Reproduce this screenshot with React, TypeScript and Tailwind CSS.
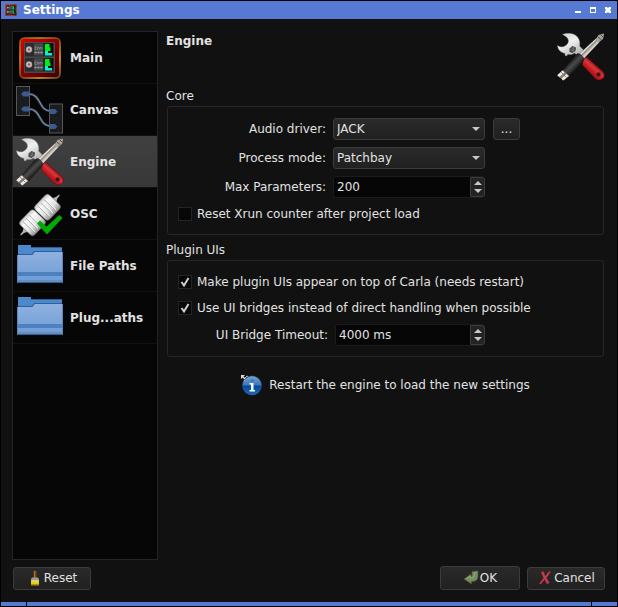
import { useState, type ReactNode } from "react";

function RackIcon({ className }: { className: string }) {
  return (
    <svg viewBox="0 0 42 42" className={className} aria-hidden="true">
      <defs>
        <linearGradient id="rackRed" x1="0" y1="0" x2="1" y2="1">
          <stop offset="0" stopColor="#e00000" />
          <stop offset="0.55" stopColor="#7c0000" />
          <stop offset="1" stopColor="#3c0000" />
        </linearGradient>
        <linearGradient id="rackGold" x1="0" y1="0" x2="1" y2="1">
          <stop offset="0" stopColor="#8a5a08" />
          <stop offset="0.25" stopColor="#c09030" />
          <stop offset="0.5" stopColor="#8a4a10" />
          <stop offset="0.75" stopColor="#d8b040" />
          <stop offset="1" stopColor="#7a4a10" />
        </linearGradient>
      </defs>
      <rect x="1" y="1" width="40" height="40" rx="4.500" fill="url(#rackRed)" stroke="url(#rackGold)" strokeWidth="1.600" />
      <rect x="5" y="5" width="31" height="31" fill="#4a4a4a" />
      {[5, 20].map((y) => (
        <g key={y} transform={`translate(0 ${y})`}>
          <rect x="6" y="1" width="29" height="13.500" fill="#2a2b2d" />
          <circle cx="10" cy="7.500" r="3.200" fill="#a89c9c" />
          <circle cx="10" cy="7.500" r="2.300" fill="#d8d0d0" />
          <circle cx="10" cy="7.500" r="1.300" fill="#a04c4c" />
          <rect x="15" y="1.500" width="9" height="12" fill="#46484a" />
          <path d="M17.500 5h-1.500v2.500h1.500M18.500 7.500V5.500h1.500v2M21 7.500v-2h1M23 5v2.500" fill="none" stroke="#a5a5a5" strokeWidth="0.600" />
          <path d="M15.500 10.500h8" stroke="#a5a5a5" strokeWidth="1.400" strokeDasharray="2 1" />
          <rect x="25.500" y="1.500" width="8.500" height="12" fill="#06120b" />
          <path d="M26 2h4.500v3.500h1V9H26z" fill="#00ee18" />
          <path d="M26 9h3v2h4v2.500h-7z" fill="#00f5d0" />
        </g>
      ))}
    </svg>
  );
}

function CanvasIcon() {
  return (
    <svg viewBox="0 0 48 48" className="size-12" aria-hidden="true">
      <rect x="0.500" y="0.500" width="13" height="29" fill="#1b1c1d" stroke="#56575a" />
      <rect x="33.500" y="18" width="13" height="29" fill="#1b1c1d" stroke="#56575a" />
      <path d="M13 8C25 8 23 25 34 25M13 23C25 23 23 40 34 40" fill="none" stroke="#384252" strokeWidth="2.500" />
      <path d="M13 8C25 8 23 25 34 25M13 23C25 23 23 40 34 40" fill="none" stroke="#7788a2" strokeWidth="1.200" />
      <path d="M5 8l2.500-2.500H13v5H7.500zM5 23l2.500-2.500H13v5H7.500zM41.500 25.500L39 23h-5v5h5zM41.500 40.500L39 38h-5v5h5z" fill="#385c91" />
    </svg>
  );
}

function ToolsIcon() {
  return (
    <svg viewBox="0 0 48 48" className="size-12" aria-hidden="true">
      <defs>
        <linearGradient id="wrench" x1="0" y1="0" x2="0.600" y2="1">
          <stop offset="0" stopColor="#c8c8c8" />
          <stop offset="0.500" stopColor="#f0f0f0" />
          <stop offset="1" stopColor="#b8b8b8" />
        </linearGradient>
        <linearGradient id="redGrip" gradientUnits="userSpaceOnUse" x1="30" y1="40" x2="38" y2="31">
          <stop offset="0" stopColor="#8e0d12" />
          <stop offset="0.450" stopColor="#c81c22" />
          <stop offset="0.700" stopColor="#d8383c" />
          <stop offset="1" stopColor="#8e1015" />
        </linearGradient>
        <linearGradient id="blackGrip" gradientUnits="userSpaceOnUse" x1="13" y1="29" x2="20" y2="36">
          <stop offset="0" stopColor="#222" />
          <stop offset="0.400" stopColor="#4c4c4c" />
          <stop offset="1" stopColor="#161616" />
        </linearGradient>
        <linearGradient id="shaft" gradientUnits="userSpaceOnUse" x1="29" y1="13" x2="33" y2="17">
          <stop offset="0" stopColor="#6a655f" />
          <stop offset="0.350" stopColor="#eeeae4" />
          <stop offset="0.600" stopColor="#8f8981" />
          <stop offset="1" stopColor="#d4cfc8" />
        </linearGradient>
      </defs>
      <path d="M5.500 1.500C10-.500 16-.300 19.500 3c3 3 3.800 6.500 3 10l4 4-5.500 6-3.500-3c-2.500 1.700-4.500 2-6.500 1.200L9.500 23 8 22.500V20.500C4 19.500.800 17 .500 12.500c2 1.500 5 2 7.500.500 2.800-1.500 4-4 3.200-6.500C10.500 4.500 8.500 3 5.500 1.500z" fill="url(#wrench)" stroke="#858585" strokeWidth="0.400" />
      <path d="M12.500 15.500l3-2.500 3.500 1.500-.500 3.500-3 2-3-1z" fill="#484848" />
      <path d="M13.500 16.500l4 2M15 14.500l2.500 3M17 14l-2 4.500" stroke="#8a8a8a" strokeWidth="0.600" />
      <path d="M26 26.500l3.500-2.500L46 38.500c2 2.500 1.500 6-.800 7.500-2.500 1.700-5 1.200-7-.500L25.500 32z" fill="url(#redGrip)" stroke="#5a070b" strokeWidth="0.500" />
      <circle cx="41.500" cy="41.500" r="2.200" fill="#3a1012" stroke="#a83034" strokeWidth="0.500" />
      <path d="M22 21L39 5.500l3.500 3.500L26.500 26z" fill="url(#shaft)" />
      <path d="M38.500 6.500L41.500 2l5-1.500L47 1.500 46 6l-4.500 3.500z" fill="#a8a29a" />
      <path d="M40.500 3.500l4 3.500M43.500 1.500l2.500 2.500" stroke="#4b4640" strokeWidth="0.900" />
      <path d="M6 37L20.500 20.500c3 0 6.500 3.500 6.500 6.500L12.500 43z" fill="url(#blackGrip)" stroke="#111" strokeWidth="0.500" />
      <path d="M6 37l6.500 6-6 4.500L0 42.500z" fill="#857e75" />
      <path d="M.500 42l5-4.500 2 2-5 4.500zM4.500 45.500l5-4.500 2 2L6 47.500z" fill="#eeeae3" />
      <path d="M4 39l5.500 5.500" stroke="#66615b" strokeWidth="0.700" />
    </svg>
  );
}

function OscIcon() {
  return (
    <svg viewBox="0 0 48 48" className="size-12" aria-hidden="true">
      <defs>
        <linearGradient id="plugBody" x1="0" y1="0" x2="0" y2="1">
          <stop offset="0" stopColor="#c4c4c4" />
          <stop offset="0.250" stopColor="#f8f8f8" />
          <stop offset="0.650" stopColor="#e2e2e2" />
          <stop offset="1" stopColor="#8c8c8c" />
        </linearGradient>
      </defs>
      <g transform="translate(24 25) rotate(-46)">
        <path d="M-20-3l-4 2-4 .500v1l4 .500 4 2zM20-3l4 2 4 .500v1L24 1l-4 2z" fill="#b4b4b4" />
        <rect x="-21" y="-10" width="20.500" height="20" rx="3.500" fill="url(#plugBody)" stroke="#6c6c6c" strokeWidth="0.500" />
        <rect x="0.500" y="-10" width="20.500" height="20" rx="3.500" fill="url(#plugBody)" stroke="#6c6c6c" strokeWidth="0.500" />
        <path d="M-16.500-8V9M-12-8V9M-7.500-8V9M5-8V9M9.500-8V9M14-8V9" stroke="#a8a8a8" strokeWidth="0.900" />
        <path d="M-15.500-8V8M-11-8V8M-6.500-8V8M6-8V8M10.500-8V8M15-8V8" stroke="#fff" strokeWidth="0.900" />
      </g>
      <path d="M21 33.500l3-3 6.500 6L43.500 25l3 3L31 44.500z" fill="#00aa06" />
    </svg>
  );
}

function FolderIcon() {
  return (
    <svg viewBox="0 0 48 48" className="size-12" aria-hidden="true">
      <defs>
        <linearGradient id="folderFront" x1="0" y1="0" x2="0" y2="1">
          <stop offset="0" stopColor="#8fb1df" />
          <stop offset="1" stopColor="#6e9cd5" />
        </linearGradient>
      </defs>
      <path d="M2 3h13v2h31v10H2z" fill="#4c88cc" />
      <path d="M15 5.500h31M2 12.500h14l2-3h28" fill="none" stroke="#2d5f9c" />
      <path d="M1 13h16l2-3h28v31H1z" fill="url(#folderFront)" />
      <path d="M1 30h46v4H1z" fill="#4b81bf" />
      <path d="M1 38h46v2H1z" fill="#608fc8" />
      <path d="M1 40.500h46" stroke="#315f92" />
      <path d="M1.500 13v28M46.500 10v31" stroke="#527fb5" strokeWidth="0.800" />
    </svg>
  );
}

function InfoIcon() {
  return (
    <svg viewBox="0 0 22 22" className="size-[22px]" aria-hidden="true">
      <defs>
        <linearGradient id="infoBlue" x1="0" y1="0" x2="0" y2="1">
          <stop offset="0" stopColor="#79a4d3" />
          <stop offset="0.450" stopColor="#3c79bd" />
          <stop offset="0.550" stopColor="#05499b" />
          <stop offset="1" stopColor="#1c68b8" />
        </linearGradient>
      </defs>
      <circle cx="12" cy="11.500" r="9.500" fill="url(#infoBlue)" stroke="#3d6795" strokeWidth="0.500" />
      <path d="M9.500 9h4v7H15v1.500H9.500V16H11v-5.500H9.500z" fill="#fff" />
      <rect x="11" y="5.500" width="2.500" height="2" fill="#3a6ca8" />
      <path d="M1 1h4L3.500 2.500l2 2-1 1-2-2L1 5z" fill="#ddd" />
      <path d="M5 4l2-2M5 6l-1 1M6 3l2-1" stroke="#ccc" strokeWidth="0.800" />
    </svg>
  );
}

function BrushIcon() {
  return (
    <svg viewBox="0 0 16 16" className="size-4" aria-hidden="true">
      <path d="M6.500 1q1.500-1 3 0v7h-3z" fill="#7a4b12" />
      <path d="M7.500 1v7" stroke="#a9701d" />
      <path d="M5 7.500h6l1 1.500v2H4V9z" fill="#9b9b91" />
      <path d="M4 10.500h8V15H4z" fill="#e5cb22" />
      <path d="M4 14h8v1.500H4z" fill="#ae910b" />
      <path d="M4.500 11h7" stroke="#f5e76b" />
    </svg>
  );
}

function ReturnIcon() {
  return (
    <svg viewBox="0 0 16 16" className="size-4" aria-hidden="true">
      <path d="M9 1.500L15 1v5.500q0 5-6.500 5V14L1 9l7-5v2.500q1.500 0 1-2z" fill="#788c62" stroke="#465736" strokeWidth="0.700" />
      <path d="M3 9l4.500-3V8q4.500.500 4-5L14 2" fill="none" stroke="#93a77c" />
    </svg>
  );
}

function CrossIcon() {
  return (
    <svg viewBox="0 0 16 16" className="size-4" aria-hidden="true">
      <path d="M4 2l2.500-.500L8.300 6 12 1.500h2L9.500 8l2.800 4.500-1.300 1.500-1.500-.500-1.800-4L4 14H2l4.500-6z" fill="#c8404f" stroke="#7a232e" strokeWidth="0.500" />
    </svg>
  );
}

const pages = [
  { name: "Main", icon: <RackIcon className="mx-[3px] size-[42px]" /> },
  { name: "Canvas", icon: <CanvasIcon /> },
  { name: "Engine", icon: <ToolsIcon /> },
  { name: "OSC", icon: <OscIcon /> },
  { name: "File Paths", icon: <FolderIcon /> },
  { name: "Plug...aths", icon: <FolderIcon /> },
];

const raised = "rounded-[3px] border border-[#3c3c3c] bg-linear-to-b from-[#2a2a2a] to-[#202020]";

function Group({ title, className, children }: { title: string; className: string; children: ReactNode }) {
  return (
    <fieldset className="min-w-0">
      <legend className="h-[18px] leading-4">{title}</legend>
      <div className={`ml-px flex flex-col rounded-[3px] border border-[#262626] ${className}`}>{children}</div>
    </fieldset>
  );
}

function Select({ id, options }: { id: string; options: string[] }) {
  return (
    <div className="relative w-[152px]">
      <select id={id} className={`block h-[22px] w-full appearance-none pr-5 pl-[3px] ${raised}`}>
        {options.map((o) => (
          <option key={o} className="bg-[#222]">{o}</option>
        ))}
      </select>
      <svg viewBox="0 0 8 4" className="pointer-events-none absolute top-[9px] right-[5px] h-1 w-2" aria-hidden="true">
        <path d="M0 0h8L4 4z" fill="#c8c8c8" />
      </svg>
    </div>
  );
}

function Spin({ id, start, step, suffix, width }: { id: string; start: number; step: number; suffix: string; width: string }) {
  const [value, setValue] = useState(start);
  return (
    <div className={`flex h-[22px] rounded-[3px] border border-[#1c1c1c] bg-[#060606] ${width}`}>
      <input
        id={id}
        className="min-w-0 flex-1 bg-transparent pl-[3px] outline-none"
        value={`${value}${suffix}`}
        onChange={(e) => setValue(parseInt(e.target.value) || 0)}
      />
      <div className="-mr-px flex w-[15px] flex-col justify-center gap-1 rounded-r-[3px] border border-[#3c3c3c] bg-[#232323]">
        <button type="button" aria-label="Increase" className="flex justify-center" onClick={() => setValue(value + step)}>
          <svg viewBox="0 0 8 4" className="h-1 w-2"><path d="M0 4h8L4 0z" fill="#c8c8c8" /></svg>
        </button>
        <button type="button" aria-label="Decrease" className="flex justify-center" onClick={() => setValue(value - step)}>
          <svg viewBox="0 0 8 4" className="h-1 w-2"><path d="M0 0h8L4 4z" fill="#c8c8c8" /></svg>
        </button>
      </div>
    </div>
  );
}

function Check({ label, checked = false }: { label: string; checked?: boolean }) {
  return (
    <label className="flex h-4 items-center gap-[5px]">
      <span className="grid size-[14px] shrink-0">
        <input
          type="checkbox"
          defaultChecked={checked}
          className="peer col-start-1 row-start-1 size-[14px] appearance-none border border-[#242424] bg-[#070707]"
        />
        <svg viewBox="0 0 14 14" className="pointer-events-none col-start-1 row-start-1 hidden size-[14px] peer-checked:block" aria-hidden="true">
          <path d="M3.500 7l2.500 3.500L10.500 3" fill="none" stroke="#d0d0d0" strokeWidth="2" />
        </svg>
      </span>
      {label}
    </label>
  );
}

export default function App() {
  const [page, setPage] = useState("Engine");
  return (
    <div className="flex min-h-screen flex-col border border-black bg-[#111] font-['DejaVu_Sans',sans-serif] text-[12px] leading-4 text-[#e2e2e2]">
      <header className="flex h-[18px] shrink-0 items-center bg-[#5679d3] pr-[5px] pl-1 text-white">
        <RackIcon className="size-3" />
        <h1 className="ml-[6px] flex-1 font-bold">Settings</h1>
        <div className="flex gap-[7px]">
          <button type="button" aria-label="Minimize" className="size-2">
            <svg viewBox="0 0 8 8" className="size-2"><path d="M1 5h6v2H1z" fill="#fff" /></svg>
          </button>
          <button type="button" aria-label="Maximize" className="size-2">
            <svg viewBox="0 0 8 8" className="size-2"><path d="M1 1h6v6H1zM2 3v3h4V3z" fill="#fff" fillRule="evenodd" /></svg>
          </button>
          <button type="button" aria-label="Close" className="size-2">
            <svg viewBox="0 0 8 8" className="size-2"><path d="M1 1h2l1 1 1-1h2v2L6 4l1 1v2H5L4 6 3 7H1V5l1-1-1-1z" fill="#fff" /></svg>
          </button>
        </div>
      </header>

      <div className="flex flex-1 flex-col pt-3 pr-3 pb-3 pl-[11px]">
        <div className="flex flex-1 gap-2">
          <nav className="w-[146px] shrink-0 border border-[#242424] bg-[#060606]">
            {pages.map((p) => (
              <button
                key={p.name}
                type="button"
                onClick={() => setPage(p.name)}
                className={`flex h-[52px] w-full items-center gap-[6px] border-b border-[#111] pl-[3px] text-left font-bold ${
                  page === p.name ? "bg-linear-to-b from-[#404040] to-[#383838]" : ""
                }`}
              >
                {p.icon}
                {p.name}
              </button>
            ))}
          </nav>

          <main className="flex min-w-0 flex-1 flex-col">
            <div className="flex items-start justify-between">
              <h2 className="pt-[2px] font-bold">Engine</h2>
              <div className="pt-[2px]"><ToolsIcon /></div>
            </div>

            <div className="mt-[7px] flex flex-col gap-[7px] pr-px">
              <Group title="Core" className="gap-2 pt-[11px] pb-3">
                <div className="grid grid-cols-[158px_1fr] items-center gap-x-[7px] gap-y-[7px] text-right">
                  <label htmlFor="driver">Audio driver:</label>
                  <div className="flex gap-2">
                    <Select id="driver" options={["JACK", "ALSA", "PulseAudio"]} />
                    <button type="button" className={`h-[22px] w-[27px] ${raised}`}>...</button>
                  </div>
                  <label htmlFor="mode">Process mode:</label>
                  <Select id="mode" options={["Patchbay", "Continuous Rack"]} />
                  <label htmlFor="params">Max Parameters:</label>
                  <Spin id="params" start={200} step={1} suffix="" width="w-[152px]" />
                </div>
                <div className="pl-[10px]">
                  <Check label="Reset Xrun counter after project load" />
                </div>
              </Group>

              <Group title="Plugin UIs" className="gap-[10px] pt-[13px] pb-[10px] pl-[10px]">
                <Check label="Make plugin UIs appear on top of Carla (needs restart)" checked />
                <Check label="Use UI bridges instead of direct handling when possible" checked />
                <div className="-mt-[2px] flex items-center gap-[7px]">
                  <label htmlFor="timeout" className="w-[150px] text-right">UI Bridge Timeout:</label>
                  <Spin id="timeout" start={4000} step={100} suffix=" ms" width="w-[150px]" />
                </div>
              </Group>
            </div>

            <p className="mt-[17px] flex items-center justify-center gap-[7px] pr-px">
              <InfoIcon />
              Restart the engine to load the new settings
            </p>
          </main>
        </div>

        <div className="mt-[6px] ml-px flex items-center gap-[7px]">
          <button type="button" className={`mr-auto flex h-[23px] w-[78px] items-center justify-center gap-px ${raised}`}>
            <BrushIcon />
            Reset
          </button>
          <button type="button" className={`flex h-6 w-[80px] items-center justify-center gap-px ${raised}`}>
            <ReturnIcon />
            OK
          </button>
          <button type="button" className={`flex h-[23px] w-[78px] items-center justify-center gap-px ${raised}`}>
            <CrossIcon />
            Cancel
          </button>
        </div>
      </div>

      <footer className="flex h-1 shrink-0 gap-px bg-black">
        <div className="w-[25px] bg-[#5679d3]" />
        <div className="flex-1 bg-[#5679d3]" />
        <div className="w-[25px] bg-[#5679d3]" />
      </footer>
    </div>
  );
}
